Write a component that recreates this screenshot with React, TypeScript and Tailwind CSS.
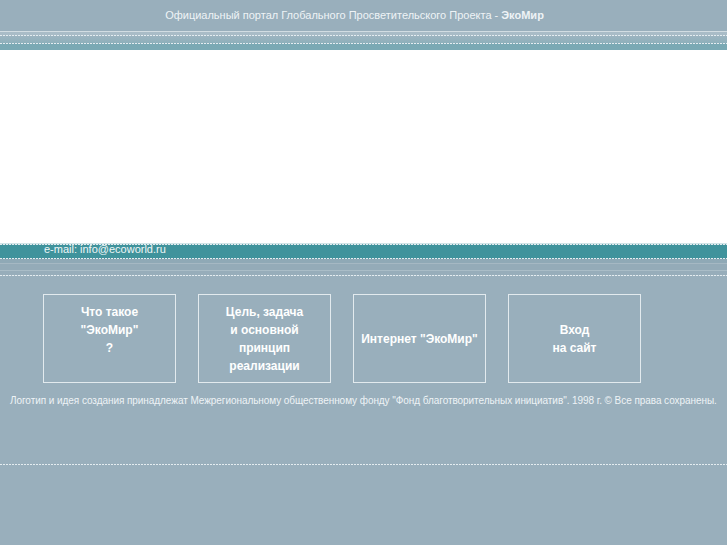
const boxes = [
  ["Что такое", "\"ЭкоМир\"", "?", "\u00a0"],
  ["Цель, задача", "и основной", "принцип", "реализации"],
  ["Интернет \"ЭкоМир\""],
  ["Вход", "на сайт"],
];

function Dotted({ className }: { className: string }) {
  return (
    <div
      className={`h-px bg-[repeating-linear-gradient(90deg,#e4ecf0_0px,#e4ecf0_2px,transparent_2px,transparent_3px)] ${className}`}
    />
  );
}

export default function App() {
  return (
    <div className="min-h-[545px] bg-[#99afbc] font-['Liberation_Sans',Arial,sans-serif] text-white">
      {/* top bar */}
      <div className="h-[31px] flex items-center justify-center text-[11px] text-[#eef3f6] pr-[18px]">
        <span>
          Официальный портал Глобального Просветительского Проекта - <b>ЭкоМир</b>
        </span>
      </div>
      <div className="h-px bg-[#d2dde3]" />
      <div className="h-[3px] bg-[#a9bcc7]" />
      <Dotted className="bg-[#a4b9c4]" />
      <div className="h-[7px] bg-gradient-to-b from-[#9cb4c0] to-[#8eb0bb]" />
      <Dotted className="bg-[#7fabb6]" />
      <div className="h-[6px] bg-[#7aa9b4]" />

      {/* white area */}
      <div className="h-[193px] bg-white" />

      {/* email band */}
      <div className="h-px bg-[#cfe3e6]" />
      <Dotted className="bg-[#62a4ac]" />
      <div className="h-[13px] bg-[#3f939c] pl-[44px] pt-px text-[11px] text-[#eef6f7] leading-[7px]">
        e-mail: info@ecoworld.ru
      </div>
      <Dotted className="bg-[#4f9aa3]" />
      <div className="h-[4px] bg-[#8fa9b6]" />
      <div className="h-px bg-[#a5b8c3]" />
      <div className="h-[6px] bg-[#94abb8]" />
      <div className="h-px bg-[#aabdc7]" />
      <div className="h-[4px] bg-[#97adba]" />
      <Dotted className="bg-[#a4b7c2]" />

      {/* menu boxes */}
      <div className="flex gap-[22px] pl-[43px] pt-[18px]">
        {boxes.map((lines, i) => (
          <div
            key={i}
            className="w-[133px] h-[89px] border border-[#e2eaee] flex flex-col items-center justify-center text-[12px] font-bold leading-[18px] text-center text-white"
          >
            {lines.map((l, j) => (
              <span key={j}>{l}</span>
            ))}
          </div>
        ))}
      </div>

      {/* footer */}
      <div className="pl-[10px] pt-[10px] text-[10px] text-[#eef3f6] tracking-[-0.06px] whitespace-nowrap">
        Логотип и идея создания принадлежат Межрегиональному общественному фонду "Фонд благотворительных инициатив". 1998 г. © Все права сохранены.
      </div>

      <Dotted className="mt-[56px] bg-transparent" />
    </div>
  );
}
